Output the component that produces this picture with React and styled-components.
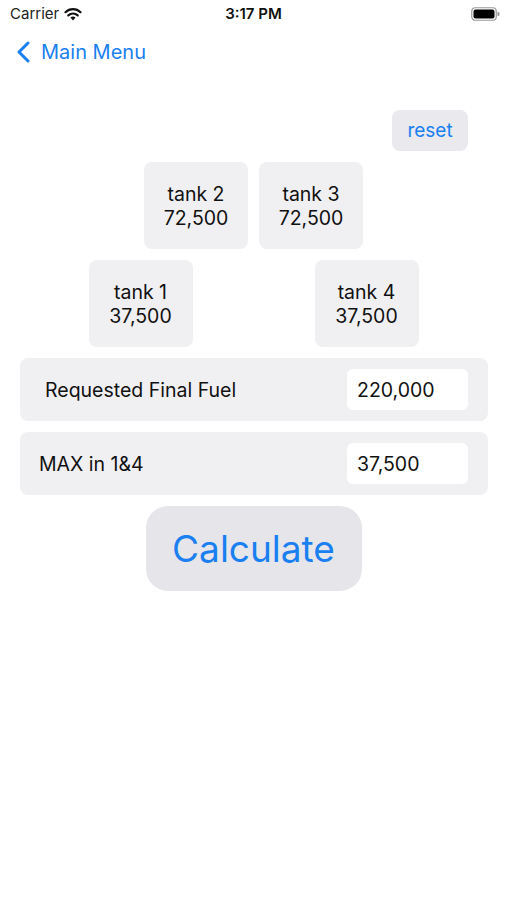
import styled, { createGlobalStyle } from "styled-components";

const BLUE = "#1a7ff0";
const GREY = "#f0f0f3";

const Global = createGlobalStyle`
  body {
    margin: 0;
    background: #fff;
    font-family: Inter, "Liberation Sans", sans-serif;
    color: #111;
  }
`;

const Page = styled.div`
  width: 507px;
  height: 900px;
  background: #fff;
`;

const StatusBar = styled.div`
  height: 27px;
  display: flex;
  align-items: center;
  justify-content: space-between;
  padding: 0 7px 0 10px;
  font-size: 15px;
  position: relative;
`;

const Carrier = styled.div`
  display: flex;
  align-items: center;
  gap: 5px;
  color: #222;
`;

const Time = styled.div`
  position: absolute;
  left: 0;
  right: 0;
  text-align: center;
  font-weight: 600;
  pointer-events: none;
`;

const NavBar = styled.div`
  height: 50px;
  display: flex;
  align-items: center;
  padding-left: 17px;
  gap: 11px;
  color: ${BLUE};
  font-size: 20px;
`;

const Content = styled.div`
  display: flex;
  flex-direction: column;
  gap: 11px;
  padding: 33px 19px 0 20px;
`;

const ResetRow = styled.div`
  display: flex;
  justify-content: flex-end;
  padding-right: 20px;
`;

const ResetButton = styled.button`
  width: 76px;
  height: 41px;
  border: none;
  border-radius: 8px;
  background: #e9e9ee;
  color: ${BLUE};
  font-family: inherit;
  font-size: 19px;
`;

const TankRow = styled.div`
  display: flex;
  justify-content: center;
  gap: ${(p) => p.gap}px;
  padding-right: 1px;
`;

const Tank = styled.div`
  width: 104px;
  height: 87px;
  border-radius: 8px;
  background: ${GREY};
  display: flex;
  flex-direction: column;
  align-items: center;
  justify-content: center;
  font-size: 19.5px;
  line-height: 24px;
`;

const FieldRow = styled.div`
  height: 63px;
  border-radius: 8px;
  background: ${GREY};
  display: flex;
  align-items: center;
  justify-content: space-between;
  padding: 0 20px 0 ${(p) => p.indent}px;
  font-size: 19.5px;
`;

const Input = styled.input`
  width: 121px;
  height: 41px;
  box-sizing: border-box;
  border: none;
  border-radius: 6px;
  background: #fff;
  padding-left: 10px;
  font-family: inherit;
  font-size: 19.5px;
  color: #111;
  outline: none;
`;

const CalcRow = styled.div`
  display: flex;
  justify-content: center;
  padding-right: 1px;
`;

const CalcButton = styled.button`
  width: 216px;
  height: 85px;
  border: none;
  border-radius: 22px;
  background: #e6e6ea;
  color: ${BLUE};
  font-family: inherit;
  font-size: 37px;
`;

const Wifi = () => (
  <svg width="18" height="14" viewBox="0 0 18 14">
    <path d="M9 13.5 L6.4 10.6 A3.8 3.8 0 0 1 11.6 10.6 Z" fill="#111" />
    <path d="M4.3 8.4 A6.8 6.8 0 0 1 13.7 8.4" stroke="#111" strokeWidth="2.2" fill="none" strokeLinecap="round" />
    <path d="M1.5 5.2 A10.6 10.6 0 0 1 16.5 5.2" stroke="#111" strokeWidth="2.2" fill="none" strokeLinecap="round" />
  </svg>
);

const Battery = () => (
  <svg width="29" height="14" viewBox="0 0 29 14">
    <rect x="0.75" y="0.75" width="24.5" height="12.5" rx="3.5" fill="none" stroke="#999" strokeWidth="1.2" />
    <rect x="2.5" y="2.5" width="21" height="9" rx="2" fill="#000" />
    <path d="M26.5 4.8 A2 2 0 0 1 26.5 9.2 Z" fill="#999" />
  </svg>
);

const Chevron = () => (
  <svg width="13" height="22" viewBox="0 0 13 22">
    <polyline points="11,2 2,11 11,20" fill="none" stroke={BLUE} strokeWidth="3" strokeLinecap="round" strokeLinejoin="round" />
  </svg>
);

export default function App() {
  return (
    <Page>
      <Global />
      <StatusBar>
        <Carrier>
          Carrier <Wifi />
        </Carrier>
        <Time>3:17 PM</Time>
        <Battery />
      </StatusBar>
      <NavBar>
        <Chevron />
        <span>Main Menu</span>
      </NavBar>
      <Content>
        <ResetRow>
          <ResetButton>reset</ResetButton>
        </ResetRow>
        <TankRow gap={11}>
          <Tank>
            <span>tank 2</span>
            <span>72,500</span>
          </Tank>
          <Tank>
            <span>tank 3</span>
            <span>72,500</span>
          </Tank>
        </TankRow>
        <TankRow gap={122}>
          <Tank>
            <span>tank 1</span>
            <span>37,500</span>
          </Tank>
          <Tank>
            <span>tank 4</span>
            <span>37,500</span>
          </Tank>
        </TankRow>
        <FieldRow indent={25}>
          <span>Requested Final Fuel</span>
          <Input defaultValue="220,000" />
        </FieldRow>
        <FieldRow indent={19}>
          <span>MAX in 1&amp;4</span>
          <Input defaultValue="37,500" />
        </FieldRow>
        <CalcRow>
          <CalcButton>Calculate</CalcButton>
        </CalcRow>
      </Content>
    </Page>
  );
}
